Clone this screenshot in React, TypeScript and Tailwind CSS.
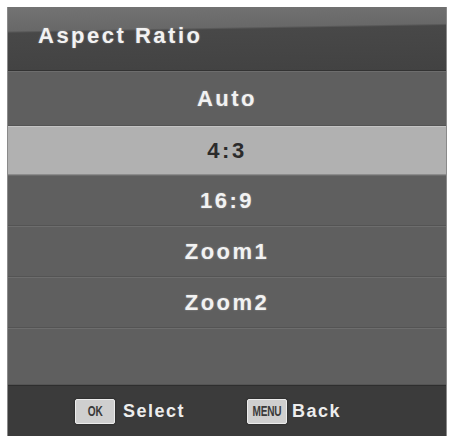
const items = [
  { label: 'Auto', h: 'h-[55px]' },
  { label: '4:3', h: 'h-[49px]', active: true },
  { label: '16:9', h: 'h-[51px]' },
  { label: 'Zoom1', h: 'h-[51px]' },
  { label: 'Zoom2', h: 'h-[51px]' },
  { label: '', h: 'h-[57px]' },
];

function Key({ children }: { children: React.ReactNode }) {
  return (
    <span className="flex h-[25px] w-[40px] items-center justify-center rounded-[2px] border border-[#ececec] bg-[#cfcfcf] text-[14px] font-bold text-[#3a3a3a] shadow-[0_0_2px_rgba(0,0,0,0.6)]">
      <span className="inline-block scale-x-[0.72] tracking-tight">{children}</span>
    </span>
  );
}

export default function App() {
  return (
    <div
      className="h-[439px] w-[451px] bg-white pl-[7px] pt-[7px]"
      style={{ fontFamily: '"Liberation Sans", Arial, sans-serif' }}
    >
      <div className="flex w-[440px] flex-col border-l border-r border-[#8a8a8a] bg-[#5f5f5f]">
        {/* Title bar */}
        <div className="flex h-[64px] items-center border-b border-[#333] bg-[linear-gradient(179deg,#737373_0%,#686868_34%,#484848_37%,#424242_100%)] pb-[6px] pl-[30px]">
          <span className="text-[22px] font-bold tracking-[2.5px] text-[#f2f2f2] [text-shadow:0_0_2px_rgba(255,255,255,0.35)]">
            Aspect Ratio
          </span>
        </div>

        {/* Options */}
        {items.map((it, i) => (
          <div
            key={i}
            className={`flex ${it.h} items-center justify-center border-t border-b ${
              it.active
                ? 'border-t-[#c4c4c4] border-b-[#8c8c8c] bg-[#b1b1b1] text-[#2b2b2b]'
                : 'border-t-[#6d6d6d] border-b-[#545454] bg-[#5f5f5f] text-[#f2f2f2] [text-shadow:0_0_2px_rgba(255,255,255,0.35)]'
            }`}
          >
            <span className="text-[22px] font-bold tracking-[2.5px]">{it.label}</span>
          </div>
        ))}

        {/* Footer hints */}
        <div className="flex h-[51px] items-center border-t border-[#2e2e2e] bg-[#3b3b3b] pl-[67px]">
          <Key>OK</Key>
          <span className="ml-[8px] text-[18px] font-bold tracking-[1.5px] text-[#ededed]">Select</span>
          <span className="ml-[62px]">
            <Key>MENU</Key>
          </span>
          <span className="ml-[5px] text-[18px] font-bold tracking-[1.5px] text-[#ededed]">Back</span>
        </div>
      </div>
    </div>
  );
}
